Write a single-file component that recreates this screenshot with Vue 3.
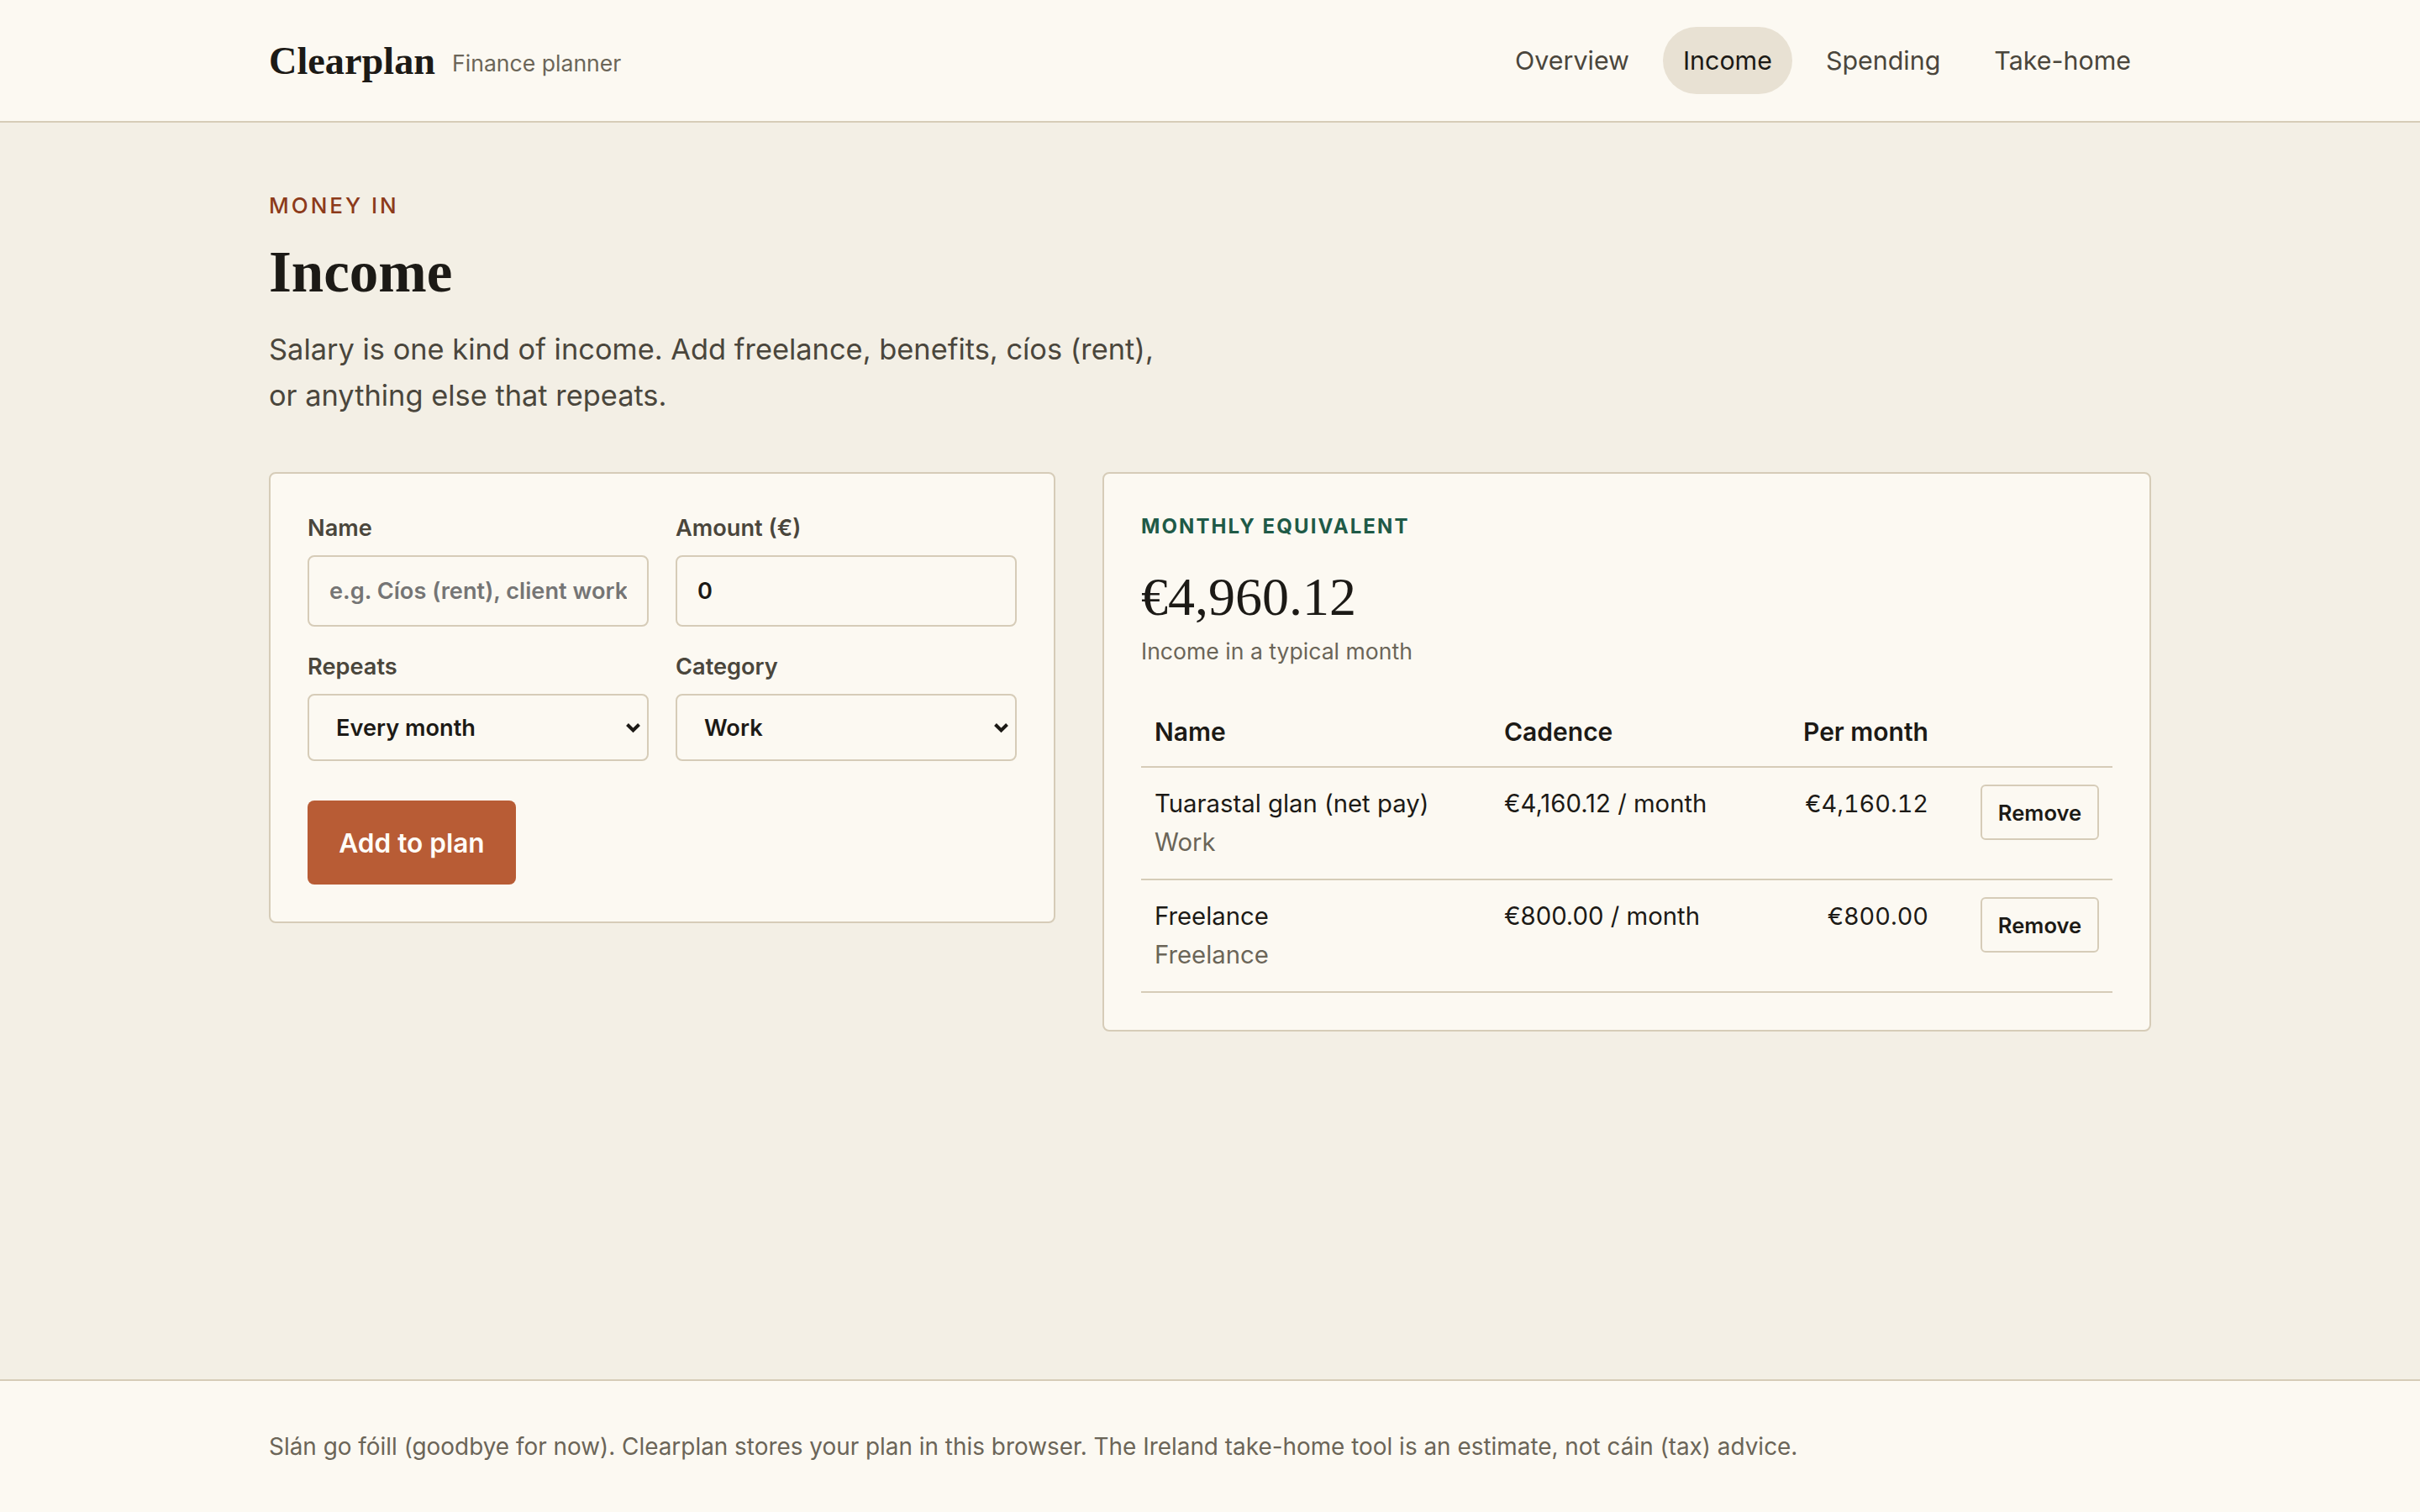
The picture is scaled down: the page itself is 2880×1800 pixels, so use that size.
<template>
  <div class="page">
    <header class="topbar">
      <div class="topbar-inner">
        <div class="brand">
          <span class="logo">Clearplan</span>
          <span class="tagline">Finance planner</span>
        </div>
        <nav class="nav">
          <a
            v-for="item in navItems"
            :key="item"
            class="nav-link"
            :class="{ active: item === 'Income' }"
          >{{ item }}</a>
        </nav>
      </div>
    </header>

    <main class="main">
      <p class="eyebrow">MONEY IN</p>
      <h1 class="title">Income</h1>
      <p class="lead">Salary is one kind of income. Add freelance, benefits, cíos (rent), or anything else that repeats.</p>

      <div class="columns">
        <form class="card form-card" @submit.prevent>
          <div class="form-grid">
            <label class="field">
              <span class="field-label">Name</span>
              <input class="text-input" type="text" placeholder="e.g. Cíos (rent), client work" />
            </label>
            <label class="field">
              <span class="field-label">Amount (€)</span>
              <input class="text-input" type="text" value="0" />
            </label>
            <label class="field">
              <span class="field-label">Repeats</span>
              <span class="select-wrap">
                <select class="select-input">
                  <option>Every month</option>
                  <option>Every week</option>
                  <option>Every year</option>
                </select>
                <svg class="chevron" viewBox="0 0 19 13" aria-hidden="true">
                  <path d="M2.5 2.5 L9.5 9.5 L16.5 2.5" />
                </svg>
              </span>
            </label>
            <label class="field">
              <span class="field-label">Category</span>
              <span class="select-wrap">
                <select class="select-input">
                  <option>Work</option>
                  <option>Freelance</option>
                  <option>Benefits</option>
                </select>
                <svg class="chevron" viewBox="0 0 19 13" aria-hidden="true">
                  <path d="M2.5 2.5 L9.5 9.5 L16.5 2.5" />
                </svg>
              </span>
            </label>
          </div>
          <button class="add-btn" type="submit">Add to plan</button>
        </form>

        <section class="card summary-card">
          <p class="summary-label">MONTHLY EQUIVALENT</p>
          <p class="summary-value">€4,960.12</p>
          <p class="summary-note">Income in a typical month</p>

          <table class="income-table">
            <colgroup>
              <col class="col-name" />
              <col class="col-cadence" />
              <col class="col-month" />
              <col class="col-action" />
            </colgroup>
            <thead>
              <tr>
                <th>Name</th>
                <th>Cadence</th>
                <th class="num">Per month</th>
                <th></th>
              </tr>
            </thead>
            <tbody>
              <tr v-for="row in rows" :key="row.name">
                <td>
                  {{ row.name }}
                  <span class="row-category">{{ row.category }}</span>
                </td>
                <td>{{ row.cadence }}</td>
                <td class="num">{{ row.month }}</td>
                <td class="action"><button class="remove-btn" type="button">Remove</button></td>
              </tr>
            </tbody>
          </table>
        </section>
      </div>
    </main>

    <footer class="footer">
      <p class="footer-text">Slán go fóill (goodbye for now). Clearplan stores your plan in this browser. The Ireland take-home tool is an estimate, not cáin (tax) advice.</p>
    </footer>
  </div>
</template>

<script setup>
const navItems = ['Overview', 'Income', 'Spending', 'Take-home']

const rows = [
  { name: 'Tuarastal glan (net pay)', category: 'Work', cadence: '€4,160.12 / month', month: '€4,160.12' },
  { name: 'Freelance', category: 'Freelance', cadence: '€800.00 / month', month: '€800.00' }
]
</script>

<style>
body {
  margin: 0;
  background: #f3efe5;
}
</style>

<style scoped>
.page {
  display: flex;
  flex-direction: column;
  min-height: 1800px;
  font-family: Inter, "Liberation Sans", sans-serif;
  color: #1c1a16;
}

.topbar {
  background: #fcf9f2;
  border-bottom: 2px solid #d6ccb8;
}

.topbar-inner {
  display: flex;
  align-items: center;
  justify-content: space-between;
  box-sizing: border-box;
  width: 2240px;
  height: 144px;
  margin: 0 auto;
}

.brand {
  display: flex;
  align-items: center;
  gap: 20px;
}

.logo {
  font-family: "Liberation Serif", serif;
  font-size: 46.3px;
  font-weight: 700;
}

.tagline {
  margin-top: 6px;
  font-size: 26.6px;
  color: #6b6558;
}

.nav {
  display: flex;
  gap: 16px;
}

.nav-link {
  padding: 16px 24px;
  border-radius: 40px;
  font-size: 30.4px;
  line-height: 48px;
  color: #4a463c;
}

.nav-link.active {
  background: #e8e1d3;
  color: #1c1a16;
}

.main {
  flex: 1;
  box-sizing: border-box;
  width: 2240px;
  margin: 0 auto;
  padding-top: 83px;
}

.eyebrow {
  margin: 0;
  font-size: 26px;
  line-height: 32px;
  font-weight: 500;
  letter-spacing: 3px;
  color: #8c3a1a;
}

.title {
  margin: 21px 0 0;
  font-family: "Liberation Serif", serif;
  font-size: 69px;
  line-height: 84px;
  font-weight: 700;
}

.lead {
  width: 1080px;
  margin: 22px 0 0;
  font-size: 34.4px;
  line-height: 55px;
  color: #4a463c;
}

.columns {
  display: grid;
  grid-template-columns: 3fr 4fr;
  gap: 56px;
  align-items: start;
  margin-top: 64px;
}

.card {
  box-sizing: border-box;
  padding: 44px;
  background: #fcf9f2;
  border: 2px solid #d6ccb8;
  border-radius: 8px;
}

.form-grid {
  display: grid;
  grid-template-columns: 1fr 1fr;
  gap: 27px 32px;
}

.field {
  display: flex;
  flex-direction: column;
  gap: 12px;
  min-width: 0;
}

.field-label {
  font-size: 27.2px;
  line-height: 41px;
  font-weight: 600;
  color: #4a463c;
}

.text-input {
  box-sizing: border-box;
  width: 100%;
  height: 85px;
  padding: 0 24px;
  background: #fcf9f2;
  border: 2px solid #d6ccb8;
  border-radius: 8px;
  font-family: inherit;
  font-size: 27.2px;
  font-weight: 600;
  color: #1c1a16;
  outline: none;
}

.text-input::placeholder {
  color: #757575;
}

.select-wrap {
  position: relative;
  display: block;
}

.select-input {
  appearance: none;
  box-sizing: border-box;
  display: block;
  width: 100%;
  height: 80px;
  padding: 0 32px;
  background: #fcf9f2;
  border: 2px solid #d6ccb8;
  border-radius: 8px;
  font-family: inherit;
  font-size: 27.2px;
  font-weight: 600;
  color: #1c1a16;
  outline: none;
}

.chevron {
  position: absolute;
  top: 34px;
  right: 9px;
  width: 19px;
  height: 13px;
  fill: none;
  stroke: #1c1a16;
  stroke-width: 4;
  pointer-events: none;
}

.add-btn {
  display: block;
  width: 248px;
  height: 100px;
  margin-top: 47px;
  padding: 0;
  background: #b85c35;
  border: none;
  border-radius: 8px;
  font-family: inherit;
  font-size: 31.6px;
  font-weight: 600;
  color: #fffdf8;
}

.summary-label {
  margin: 0;
  font-size: 24px;
  line-height: 38px;
  font-weight: 700;
  letter-spacing: 2.1px;
  color: #1f5a47;
}

.summary-value {
  margin: 27px 0 0;
  font-family: "Liberation Serif", serif;
  font-size: 64px;
  line-height: 76px;
}

.summary-note {
  margin: 5px 0 0;
  font-size: 26.6px;
  line-height: 42px;
  color: #6b6558;
}

.income-table {
  width: 100%;
  margin-top: 34px;
  border-collapse: collapse;
  table-layout: fixed;
  font-size: 29.3px;
  line-height: 46px;
}

.col-name { width: 416px; }
.col-cadence { width: 346px; }
.col-month { width: 191px; }
.col-action { width: 203px; }

.income-table th {
  padding: 18px 16px;
  text-align: left;
  font-size: 30px;
  font-weight: 600;
  border-bottom: 2px solid #d6ccb8;
}

.income-table td {
  padding: 20px 16px;
  vertical-align: top;
  border-bottom: 2px solid #d6ccb8;
}

.income-table .num {
  text-align: right;
}

.income-table td.num {
  font-size: 28.8px;
  font-variant-numeric: tabular-nums;
}

.income-table .action {
  text-align: right;
}

.row-category {
  display: block;
  color: #6b6558;
}

.remove-btn {
  width: 141px;
  height: 66px;
  padding: 0;
  background: #fcf9f2;
  border: 2px solid #d6ccb8;
  border-radius: 6px;
  font-family: inherit;
  font-size: 25.6px;
  font-weight: 600;
  color: #1c1a16;
}

.footer {
  background: #fcf9f2;
  border-top: 2px solid #d6ccb8;
}

.footer-text {
  box-sizing: border-box;
  width: 2240px;
  margin: 0 auto;
  padding: 56px 0;
  font-size: 27.9px;
  line-height: 44px;
  color: #6b6558;
}
</style>
